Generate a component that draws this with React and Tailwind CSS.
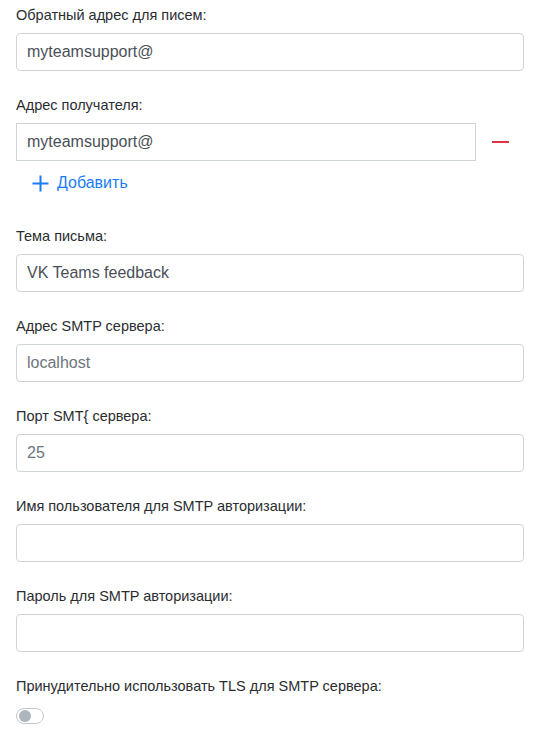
import React from 'react';

const font = { fontFamily: '"Liberation Sans", Arial, sans-serif' };

const Field = ({ label, value, muted }) => (
  <div className="mb-6">
    <div className="text-[14.5px] leading-5 text-[#2a2d30] mb-2">{label}</div>
    <input
      readOnly
      value={value}
      className={`block w-full h-[38px] border border-[#ced4da] rounded-[4px] bg-white px-[10px] text-base outline-none ${muted ? 'text-[#6c757d]' : 'text-[#495057]'}`}
    />
  </div>
);

export default function App() {
  return (
    <div className="bg-white min-h-[753px] px-4 pt-[5px]" style={font}>
      <Field label="Обратный адрес для писем:" value="myteamsupport@" />

      <div>
        <div className="text-[14.5px] leading-5 text-[#2a2d30] mb-2">Адрес получателя:</div>
        <div className="flex items-center">
          <input
            readOnly
            value="myteamsupport@"
            className="block w-[460px] h-[38px] border border-[#ced4da] bg-white px-[10px] text-base text-[#495057] outline-none"
          />
          <div className="flex-1 flex justify-center">
            <span className="block w-[17px] h-[2px] bg-[#dc3545]"></span>
          </div>
        </div>
        <button className="flex items-center h-6 mt-[10px] ml-4 text-base text-[#1a7cf5] gap-2">
          <svg width="17" height="17" viewBox="0 0 17 17" fill="none" stroke="#1a7cf5" strokeWidth="2">
            <path d="M8.5 0.5v16M0.5 8.5h16" />
          </svg>
          Добавить
        </button>
      </div>

      <div className="mt-[31px]">
        <Field label="Тема письма:" value="VK Teams feedback" />
        <Field label="Адрес SMTP сервера:" value="localhost" muted />
        <Field label="Порт SMT{ сервера:" value="25" muted />
        <Field label="Имя пользователя для SMTP авторизации:" value="" />
        <Field label="Пароль для SMTP авторизации:" value="" />
      </div>

      <div>
        <div className="text-[14.5px] leading-5 text-[#2a2d30] mb-3">Принудительно использовать TLS для SMTP сервера:</div>
        <div className="w-7 h-4 rounded-full border border-[#c4c8cc] bg-white flex items-center px-[2px]">
          <span className="block w-3 h-3 rounded-full bg-[#adb5bd]"></span>
        </div>
      </div>
    </div>
  );
}
